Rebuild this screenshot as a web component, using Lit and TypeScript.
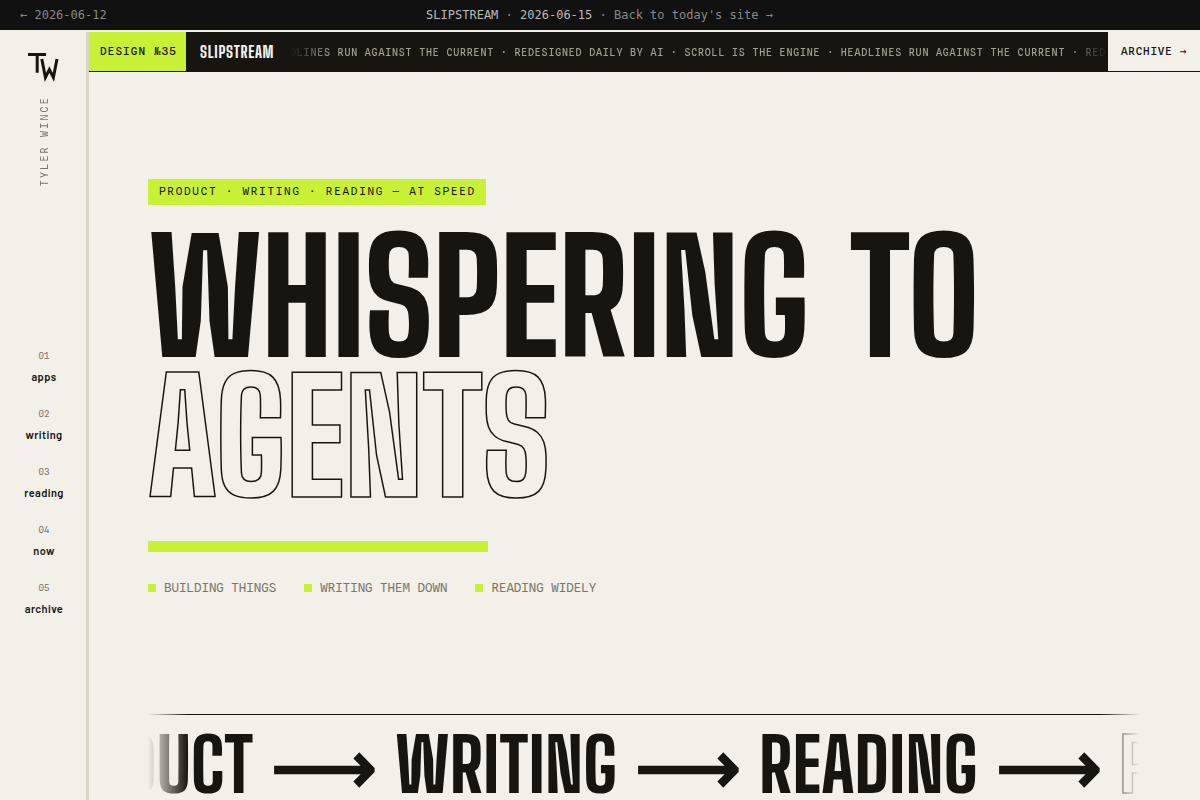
import { LitElement, html, css } from "lit";
import { customElement } from "lit/decorators.js";

const NAV = ["apps", "writing", "reading", "now", "archive"];
const FACTS = ["Building things", "Writing them down", "Reading widely"];
const TICKER = "Headlines run against the current · Redesigned daily by AI · Scroll is the engine · ";

@customElement("app-root")
export class AppRoot extends LitElement {
  static styles = css`
    :host { display: flex; flex-direction: column; height: 800px; overflow: hidden; background: #f3f0e9; color: #17150f; font-family: "Spline Sans", sans-serif; }
    * { box-sizing: border-box; }
    .daybar { flex: none; height: 30px; margin-bottom: 2px; padding: 0 21px 0 20px; background: #111; color: #888; display: grid; grid-template-columns: 1fr auto 1fr; align-items: center; font: 12px/15px "DejaVu Sans Mono", monospace; white-space: pre; }
    .daybar b { font-weight: 400; color: #bbb; }
    .frame { flex: 1; min-height: 0; display: grid; grid-template-columns: 89px 1fr; }
    .rail { border-right: 3px solid #d8d5c6; display: flex; flex-direction: column; align-items: center; padding-left: 2px; }
    .logo { display: block; width: 32px; height: 32px; margin-top: 20px; flex: none; }
    .name { writing-mode: vertical-rl; transform: rotate(180deg); margin-top: 12px; font: 400 10px/12px "Spline Sans Mono", monospace; letter-spacing: 2.2px; color: #7a776b; text-transform: uppercase; }
    .nav { margin-top: 164px; display: flex; flex-direction: column; gap: 22px; align-items: center; }
    .item { display: flex; flex-direction: column; align-items: center; gap: 8px; height: 36px; }
    .num { font: 400 9px/11px "Spline Sans Mono", monospace; color: #7a776b; }
    .lab { font: 600 11px/15px "Barlow", sans-serif; letter-spacing: 0.4px; }
    .main { min-width: 0; display: flex; flex-direction: column; }
    .strip { flex: none; height: 40px; border-bottom: 1px solid #17150f; background: #17150f; display: flex; font: 500 11px/13px "Spline Sans Mono", monospace; text-transform: uppercase; }
    .issue { background: #c8f135; padding: 13px 9px 0 11px; width: 97px; letter-spacing: 1.1px; white-space: nowrap; }
    .word { color: #f3f0e9; font: 700 16px/39px "Big Shoulders", sans-serif; letter-spacing: 0.72px; padding: 0 0 0 14px; width: 104px; }
    .ticker { flex: 1; min-width: 0; overflow: hidden; display: flex; align-items: center; padding-top: 2px; mask-image: linear-gradient(90deg, transparent, #000 5%, #000 95%, transparent); }
    .ticker span { white-space: pre; font-weight: 500; font-size: 10px; letter-spacing: 0.8px; color: #a09c91; transform: translate(-20.4px, 0.4px); will-change: transform; }
    .arch { background: #f3f0e9; width: 92px; padding: 13px 0 0 13px; letter-spacing: 0.77px; white-space: nowrap; }
    .hero { padding: 107px 60px 0 59px; display: flex; flex-direction: column; align-items: flex-start; flex: 1; min-height: 0; }
    .tag { height: 26px; background: #c8f135; padding: 0 10px 0 11px; font: 400 11px/25px "Spline Sans Mono", monospace; letter-spacing: 1.74px; text-transform: uppercase; white-space: nowrap; }
    .title { margin: 22px 0 0; font: 800 156px/140.4px "Big Shoulders Display", sans-serif; letter-spacing: -0.005em; word-spacing: 9.6px; text-transform: uppercase; }
    .title span { display: block; white-space: nowrap; }
    .title .out { color: transparent; -webkit-text-stroke: 1.5px #17150f; }
    .bar { margin-top: 33px; width: 340px; height: 11px; background: #c8f135; }
    .facts { margin-top: 28px; display: flex; gap: 28px; font: 400 12.48px/16px "Spline Sans Mono", monospace; color: #7a776b; text-transform: uppercase; }
    .fact { display: flex; align-items: center; gap: 8px; white-space: nowrap; }
    .fact::before { content: ""; width: 8px; height: 8px; background: #c8f135; }
    .marquee { margin-top: auto; height: 86px; align-self: stretch; flex: none; overflow: hidden; border-top: 1px solid #17150f; mask-image: linear-gradient(90deg, transparent, #000 4%, #000 96%, transparent); }
    .track { display: flex; white-space: nowrap; gap: 17.6px; margin-left: -126.6px; padding-top: 1px; font: 800 74px/98px "Big Shoulders Display", sans-serif; letter-spacing: 0.5px; }
    .track .out { color: transparent; -webkit-text-stroke: 1.5px #17150f; }
  `;

  render() {
    return html`
      <div class="daybar">
        <span>← 2026-06-12</span>
        <span><b>SLIPSTREAM</b> · <b>2026-06-15</b> · Back to today's site →</span>
        <span></span>
      </div>
      <div class="frame">
        <div class="rail">
          <svg class="logo" viewBox="0 0 32 32" fill="none" stroke="#17150f" stroke-width="3" stroke-miterlimit="10">
            <path d="M0 2.6H18M9.2 2.6V20.7M13.8 7L17.4 25.5L21.4 17.5L25.4 25.5L29 7" />
          </svg>
          <span class="name">Tyler Wince</span>
          <div class="nav">
            ${NAV.map((n, i) => html`<div class="item"><span class="num">0${i + 1}</span><span class="lab">${n}</span></div>`)}
          </div>
        </div>
        <div class="main">
          <div class="strip">
            <span class="issue">Design №35</span>
            <span class="word">Slipstream</span>
            <div class="ticker"><span>${TICKER}${TICKER}</span></div>
            <span class="arch">Archive →</span>
          </div>
          <div class="hero">
            <div class="tag">Product · Writing · Reading — at speed</div>
            <h1 class="title"><span>Whispering to</span><span class="out">Agents</span></h1>
            <div class="bar"></div>
            <div class="facts">${FACTS.map((f) => html`<span class="fact">${f}</span>`)}</div>
            <div class="marquee">
              <div class="track">
                <span>PRODUCT</span><span>⟶</span><span>WRITING</span><span>⟶</span><span>READING</span><span>⟶</span><span class="out">PRODUCT</span>
              </div>
            </div>
          </div>
        </div>
      </div>`;
  }
}
